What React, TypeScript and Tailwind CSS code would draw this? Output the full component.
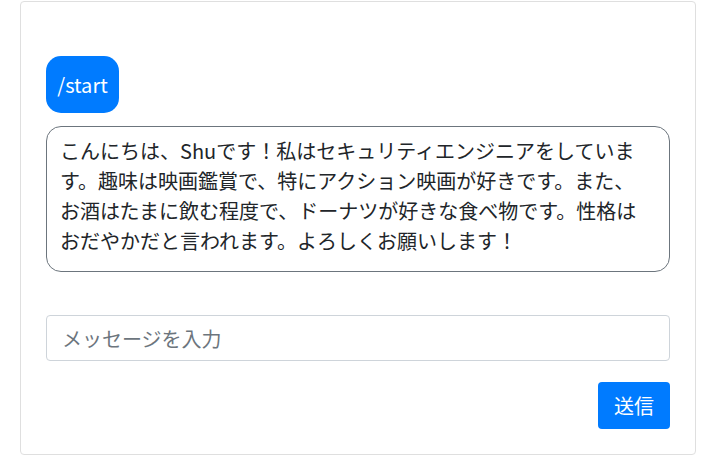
export default function App() {
  return (
    <div
      className="w-[716px] h-[474px] bg-white px-5 pt-px"
      style={{ fontFamily: '"Noto Sans CJK JP", sans-serif' }}
    >
      <div className="h-[454px] border border-[#dfdfdf] rounded-[4px] px-[25px] pt-[54px]">
        <div className="flex flex-col items-start gap-[13px]">
          <div className="h-[57px] w-[73px] flex items-center justify-center rounded-[15px] bg-[#007bff] text-white text-[20px]">
            /start
          </div>
          <div className="w-full border border-[#6c757d] rounded-[15px] pl-[13px] pr-[24px] pt-[9px] pb-[15px] text-[20px] leading-[30px] text-[#212529]">
            こんにちは、Shuです！私はセキュリティエンジニアをしています。趣味は映画鑑賞で、特にアクション映画が好きです。また、お酒はたまに飲む程度で、ドーナツが好きな食べ物です。性格はおだやかだと言われます。よろしくお願いします！
          </div>
        </div>
        <input
          className="mt-[43px] w-full h-[46px] border border-[#ced4da] rounded-[4px] px-[15px] text-[20px] text-[#495057] placeholder:text-[#6c757d] outline-none"
          placeholder="メッセージを入力"
        />
        <div className="flex justify-end mt-[21px]">
          <button className="w-[72px] h-[47px] rounded-[4px] bg-[#007bff] text-white text-[20px]">
            送信
          </button>
        </div>
      </div>
    </div>
  );
}
